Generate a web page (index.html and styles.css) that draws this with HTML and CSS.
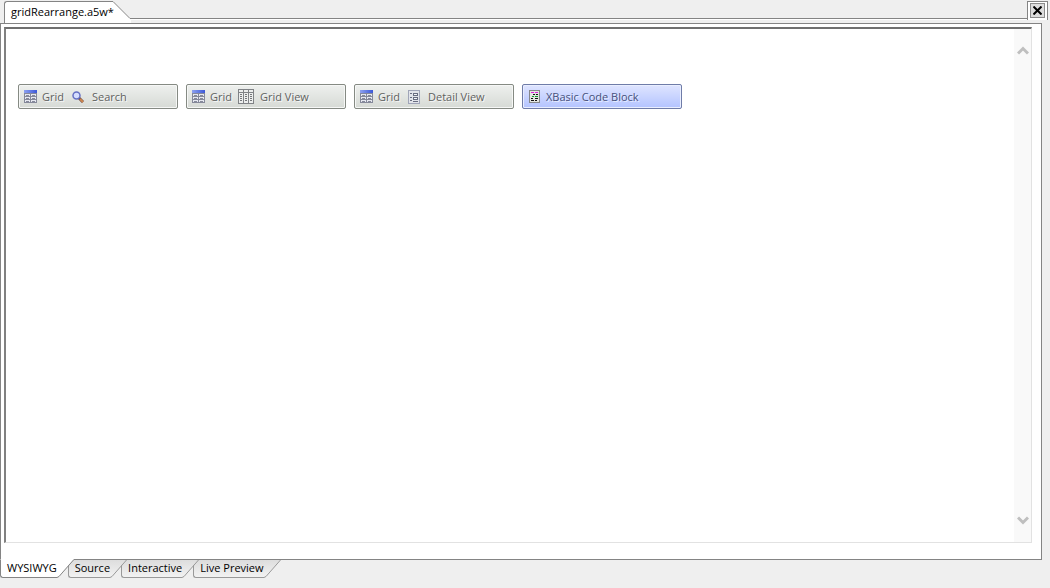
FILE: index.html
```
<!DOCTYPE html>
<html lang="en">
<head>
<meta charset="UTF-8">
<meta name="viewport" content="width=device-width, initial-scale=1.0">
<title>gridRearrange.a5w</title>
<link rel="stylesheet" href="styles.css">
</head>
<body>

<!-- Shared icons -->
<svg class="defs" aria-hidden="true">
    <defs>
        <linearGradient id="blue" x1="0" x2="1"><stop offset="0" stop-color="#8ea2f0"/><stop offset="1" stop-color="#3c58d8"/></linearGradient>
        <linearGradient id="tabfill" x1="0" x2="0" y1="0" y2="1"><stop offset="0" stop-color="#dcdcdc"/><stop offset="1" stop-color="#f2f2f2"/></linearGradient>
        <symbol id="grid" viewBox="0 0 13 13">
            <path fill="#85899a" d="M0 0h13v13H0z"/>
            <path fill="url(#blue)" d="M0 0h13v3H0z"/>
            <path fill="#e6e8f0" d="M1 4h5v2H1zM7 4h5v2H7zM1 7h5v2H1zM7 7h5v2H7zM1 10h5v2H1zM7 10h5v2H7z"/>
            <path fill="#85899a" d="M2 5h3v1H2zM8 5h3v1H8zM2 8h3v1H2zM8 8h3v1H8zM2 11h3v1H2zM8 11h3v1H8z"/>
        </symbol>
        <symbol id="search" viewBox="0 0 12 12">
            <path stroke="#6b4a48" stroke-width="3" d="M7 7l4 4"/>
            <path stroke="#d08850" stroke-width="2" d="M8 8l3 3"/>
            <circle cx="4.5" cy="4.5" r="3.5" fill="#d5ddff" stroke="#6670c4" stroke-width="1.5"/>
        </symbol>
        <symbol id="columns" viewBox="0 0 16 15">
            <path fill="#808386" d="M0 0h16v15H0z"/>
            <path fill="#eceeed" d="M1 1h4v2H1zM6 1h4v2H6zM11 1h4v2h-4zM1 4h4v10H1zM6 4h4v10H6zM11 4h4v10h-4z"/>
            <path fill="#74777a" d="M2 5h2v1H2zM7 5h2v1H7zM12 5h2v1h-2zM2 7h2v1H2zM7 7h2v1H7zM12 7h2v1h-2zM2 9h2v1H2zM7 9h2v1H7zM12 9h2v1h-2zM2 11h2v1H2zM7 11h2v1H7zM12 11h2v1h-2z"/>
        </symbol>
        <symbol id="detail" viewBox="0 0 12 14">
            <path fill="#a0a5b8" d="M0 0h12v14H0z"/>
            <path fill="#e2e4ea" d="M1 1h10v12H1z"/>
            <path fill="#686d80" d="M2 3h2v1H2zM2 7h2v1H2zM2 10h2v1H2zM5 3h5v3H5zM5 7h5v3H5zM5 11h5v1H5z"/>
            <path fill="#f4f5f8" d="M6 4h3v1H6zM6 8h3v1H6z"/>
        </symbol>
        <symbol id="code" viewBox="0 0 11 13">
            <path fill="#85878a" d="M0 0h11v13H0z"/>
            <path fill="#e4e6e2" d="M1 1h9v11H1z"/>
            <path fill="#e020e0" d="M2 2h3v1H2zM6 2h3v1H6z"/>
            <path fill="#111" d="M4 4h2v1H4zM7 4h2v1H7zM2 8h2v1H2zM6 8h3v1H6zM2 10h3v1H2zM6 10h2v1H6z"/>
            <path fill="#159a30" d="M3 6h2v1H3zM6 6h3v1H6z"/>
        </symbol>
    </defs>
</svg>

<header class="topbar">
    <button class="file-tab">gridRearrange.a5w*</button>
    <svg class="file-slope" width="18" height="22" viewBox="0 0 18 22" aria-hidden="true">
        <path fill="#fff" d="M0 0l17 17h1v5H0z"/>
        <path fill="none" stroke="#848484" d="M0 .5L17 17.500h1"/>
    </svg>
    <div class="topline"></div>
    <div class="close-box">
        <button class="close" aria-label="Close">
            <svg width="9" height="9" viewBox="0 0 9 9"><path stroke="#000" stroke-width="2" d="M.5.5l8 8M8.500.5l-8 8"/></svg>
        </button>
    </div>
</header>

<main class="panel">
    <div class="editor">
        <div class="canvas">
            <button class="block">
                <svg width="13" height="13"><use href="#grid"/></svg><span class="kind">Grid</span>
                <span class="part"><svg width="12" height="12"><use href="#search"/></svg></span><span>Search</span>
            </button>
            <button class="block">
                <svg width="13" height="13"><use href="#grid"/></svg><span class="kind">Grid</span>
                <span class="part"><svg width="16" height="15"><use href="#columns"/></svg></span><span>Grid View</span>
            </button>
            <button class="block">
                <svg width="13" height="13"><use href="#grid"/></svg><span class="kind">Grid</span>
                <span class="part"><svg width="12" height="14"><use href="#detail"/></svg></span><span>Detail View</span>
            </button>
            <button class="block code">
                <svg width="13" height="13"><use href="#code"/></svg><span>XBasic Code Block</span>
            </button>
        </div>
        <div class="scrollbar">
            <button class="arrow" aria-label="Scroll up"><svg width="12" height="9" viewBox="0 0 12 9"><path fill="none" stroke="#bfbfbf" stroke-width="3" d="M1 7.500l5-5 5 5"/></svg></button>
            <button class="arrow" aria-label="Scroll down"><svg width="12" height="9" viewBox="0 0 12 9"><path fill="none" stroke="#bfbfbf" stroke-width="3" d="M1 1.500l5 5 5-5"/></svg></button>
        </div>
    </div>
</main>

<nav class="views">
    <div class="view active">
        <button>WYSIWYG</button>
        <svg width="17" height="19" viewBox="0 0 17 19"><path fill="#fff" d="M0 0h17L1 18H0z"/><path fill="none" stroke="#848484" d="M0 18.500L2 17.500L16.500 1"/></svg>
    </div>
    <div class="view">
        <button>Source</button>
        <svg width="17" height="19" viewBox="0 0 17 19"><path fill="url(#tabfill)" d="M0 0h17L1 18H0z"/><path fill="none" stroke="#999" d="M0 18.500L2 17.500L16.500 1"/><path fill="#848484" d="M0 0h17v1H0z"/></svg>
    </div>
    <div class="view">
        <button>Interactive</button>
        <svg width="17" height="19" viewBox="0 0 17 19"><path fill="url(#tabfill)" d="M0 0h17L1 18H0z"/><path fill="none" stroke="#999" d="M0 18.500L2 17.500L16.500 1"/><path fill="#848484" d="M0 0h17v1H0z"/></svg>
    </div>
    <div class="view">
        <button>Live Preview</button>
        <svg width="17" height="19" viewBox="0 0 17 19"><path fill="url(#tabfill)" d="M0 0h17L1 18H0z"/><path fill="none" stroke="#999" d="M0 18.500L2 17.500L16.500 1"/><path fill="#848484" d="M0 0h17v1H0z"/></svg>
    </div>
    <div class="views-rest"></div>
</nav>

</body>
</html>
```
FILE: styles.css
```
* {
    box-sizing: border-box;
}

body {
    margin: 0;
    height: 100vh;
    display: flex;
    flex-direction: column;
    overflow: hidden;
    background: #efefef;
    color: #000;
    font: 11px/14px "Open Sans", "Noto Sans", sans-serif;
}

button {
    margin: 0;
    padding: 0;
    border: 0;
    background: none;
    color: inherit;
    font: inherit;
    white-space: nowrap;
}

svg {
    display: block;
    flex: none;
}

.defs {
    position: absolute;
    width: 0;
    height: 0;
}

/* --- File tab bar --- */
.topbar {
    display: flex;
    flex: none;
    height: 23px;
    padding: 1px 2px 0 4px;
}

/* the name may run over the slope, so it stays on top */
.file-tab {
    position: relative;
    z-index: 1;
    width: 109px;
    height: 22px;
    padding: 0 0 2px 6px;
    text-align: left;
    background: #fff;
    border: 1px solid #848484;
    border-width: 1px 0 0 1px;
    border-top-left-radius: 3px;
}

.topline {
    flex: 1;
    margin-top: 17px;
    height: 2px;
    border-top: 1px solid #848484;
    background: #fff;
}

.close-box {
    width: 21px;
    height: 19px;
    padding: 1px 2px;
    background: #fff;
    border: 1px solid #848484;
    border-bottom: 0;
}

.close {
    display: flex;
    align-items: center;
    justify-content: center;
    width: 15px;
    height: 15px;
    background: #dcdcdc;
    border: 1px solid #8c8c8c;
}

/* --- Editor panel --- */
.panel {
    display: flex;
    flex: 1;
    min-height: 0;
    margin-right: 8px;
    padding: 3px 9px 16px 3px;
    background: #fff;
    border: 1px solid #848484;
    border-bottom: 0;
}

.editor {
    display: flex;
    flex: 1;
    border: 1px solid #e2e2e2;
    border-top: 2px solid #707070;
    border-left: 2px solid #808080;
}

.canvas {
    display: flex;
    flex: 1;
    align-items: flex-start;
    gap: 8px;
    padding: 55px 12px 0;
}

.block {
    display: flex;
    align-items: center;
    width: 160px;
    height: 25px;
    padding: 0 5px;
    color: #5f625f;
    text-shadow: 1px 1px #f7f7f7;
    background: linear-gradient(#eef0ee, #d6dad5);
    border: 1px solid #858a83;
    border-radius: 2px;
    box-shadow: inset 0 0 0 1px #f6f7f6;
}

.block.code {
    color: #46507c;
    text-shadow: 1px 1px #e8edff;
    background: linear-gradient(#dfe5ff, #b3c3ff);
    border-color: #6f7ca8;
    box-shadow: inset 0 0 0 1px #e9eeff;
}

.kind {
    width: 28px;
}

.block span {
    text-align: left;
}

.block svg + span {
    margin-left: 5px;
}

.part {
    display: flex;
    justify-content: center;
    width: 16px;
    margin-right: 6px;
}

.scrollbar {
    display: flex;
    flex-direction: column;
    justify-content: space-between;
    align-items: center;
    width: 17px;
    padding: 17px 0;
    background: #f9f9f9;
}

/* --- View tabs --- */
.views {
    display: flex;
    flex: none;
    height: 29px;
    margin-right: 8px;
}

.view {
    display: flex;
    position: relative;
    height: 19px;
}

/* each tab tucks under the slope of the one before it */
.view + .view {
    margin-left: -6px;
}

.view:nth-child(1) {
    z-index: 4;
}

.view:nth-child(2) {
    z-index: 3;
}

.view:nth-child(3) {
    z-index: 2;
}

.view button {
    height: 19px;
    padding: 0 0 1px 6px;
    background: linear-gradient(#dcdcdc, #f2f2f2);
    border: 1px solid #999;
    border-top-color: #848484;
    border-right: 0;
    border-bottom-left-radius: 3px;
}

.view.active button {
    background: #fff;
    border-color: #848484;
    border-top-color: #fff;
}

.views-rest {
    flex: 1;
    height: 1px;
    background: #848484;
}
```
